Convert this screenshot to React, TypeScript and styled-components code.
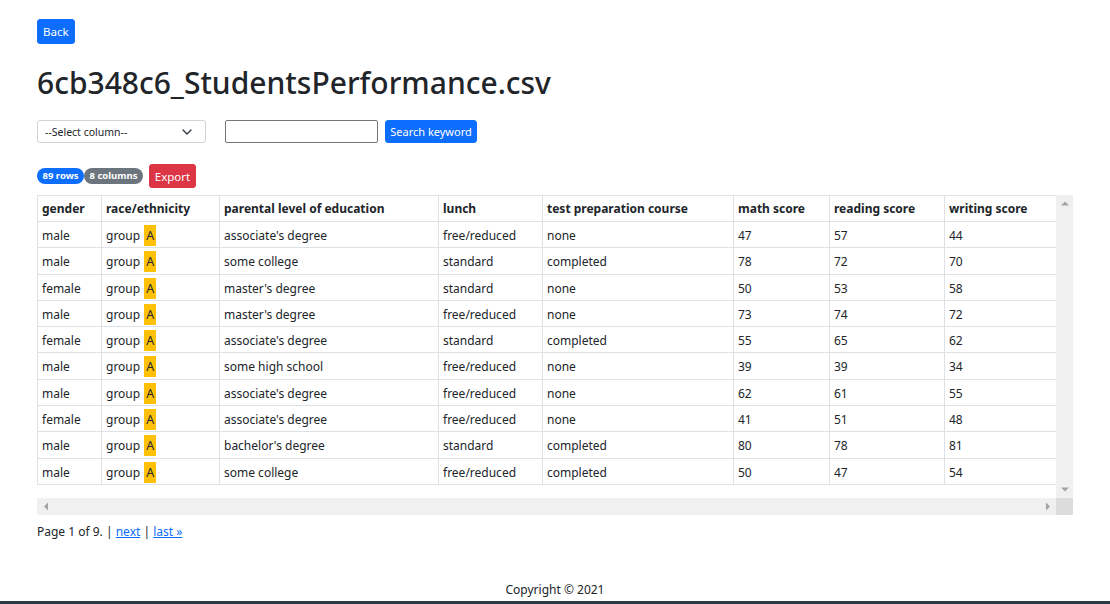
import React from "react";
import styled, { createGlobalStyle } from "styled-components";

const Global = createGlobalStyle`
  html, body { margin: 0; padding: 0; background: #fff; overflow: hidden; }
  body { font-family: "Noto Sans", "Open Sans", sans-serif; color: #212529; font-size: 12px; }
  * { box-sizing: border-box; }
`;

const Page = styled.div`
  display: flex;
  flex-direction: column;
`;

const Main = styled.main`
  padding: 19px 37px 0 37px;
  display: flex;
  flex-direction: column;
  align-items: flex-start;
`;

const Btn = styled.button<{ $variant: "primary" | "danger" }>`
  font-family: inherit;
  font-size: 11.5px;
  line-height: 17px;
  color: #fff;
  border: 1px solid ${(p) => (p.$variant === "primary" ? "#0d6efd" : "#dc3545")};
  background: ${(p) => (p.$variant === "primary" ? "#0d6efd" : "#dc3545")};
  border-radius: 3px;
  padding: 3px 5px;
  cursor: pointer;
`;

const Title = styled.h1`
  font-size: 30px;
  font-weight: 500;
  line-height: 38px;
  margin: 20px 0 18px 0;
  color: #212529;
`;

const Controls = styled.div`
  display: flex;
  align-items: center;
  gap: 7px;
`;

const SelectBox = styled.div`
  width: 169px;
  height: 23px;
  border: 1px solid #ced4da;
  border-radius: 3px;
  display: flex;
  align-items: center;
  justify-content: space-between;
  padding: 0 13px 0 7px;
  font-size: 10.5px;
  color: #212529;
  margin-right: 12px;
`;

const TextInput = styled.input`
  width: 153px;
  height: 23px;
  border: 1px solid #767676;
  border-radius: 2px;
  padding: 0 4px;
  font-family: inherit;
`;

const SearchBtn = styled(Btn)`
  height: 23px;
  width: 92px;
  padding: 0;
  font-size: 11px;
`;

const InfoRow = styled.div`
  display: flex;
  align-items: center;
  margin-top: 21px;
`;

const Badge = styled.span<{ $bg: string }>`
  display: inline-block;
  background: ${(p) => p.$bg};
  color: #fff;
  font-size: 9.5px;
  font-weight: 700;
  line-height: 16px;
  height: 16px;
  padding: 0 5.5px;
  border-radius: 8px;
`;

const ExportBtn = styled(Btn)`
  margin-left: 6px;
  height: 24px;
  width: 47px;
  padding: 0;
`;

const Scroller = styled.div`
  width: 100%;
  margin-top: 7px;
  display: grid;
  grid-template-columns: 1fr 17px;
  grid-template-rows: 303px 17px;
  overflow: hidden;
`;

const Viewport = styled.div`
  overflow: hidden;
  background: #fff;
`;

const Track = styled.div<{ $dir: "v" | "h" }>`
  background: #f0f0f0;
  display: flex;
  flex-direction: ${(p) => (p.$dir === "v" ? "column" : "row")};
  justify-content: space-between;
  align-items: center;
`;

const Corner = styled.div`
  background: #dcdcdc;
`;

const Arrow = styled.span<{ $rot: number }>`
  width: 17px;
  height: 17px;
  display: flex;
  align-items: center;
  justify-content: center;
  & svg { transform: rotate(${(p) => p.$rot}deg); }
`;

const Tri = () => (
  <svg width="8" height="5" viewBox="0 0 8 5">
    <path d="M0 4.5L4 0.5L8 4.5Z" fill="#a3a3a3" />
  </svg>
);

const Table = styled.table`
  width: 100%;
  border-collapse: collapse;
  table-layout: fixed;
`;

const Th = styled.th`
  text-align: left;
  font-weight: 700;
  font-size: 12px;
  line-height: 17px;
  padding: 4px 4px;
  border: 1px solid #dee2e6;
  white-space: nowrap;
  color: #212529;
`;

const Td = styled.td`
  font-size: 12px;
  line-height: 17.3px;
  padding: 5px 4px 3px 4px;
  border: 1px solid #dee2e6;
  white-space: nowrap;
  color: #212529;
`;

const Mark = styled.span`
  background: #ffc107;
  padding: 2px 2px 2px 2px;
  font-size: 12.5px;
  margin-left: 1px;
`;

const Pager = styled.div`
  margin-top: 8px;
  font-size: 12px;
  line-height: 17px;
`;

const Link = styled.a`
  color: #0d6efd;
  text-decoration: underline;
`;

const Copyright = styled.div`
  margin-top: 41px;
  text-align: center;
  font-size: 12px;
  line-height: 17px;
  padding-bottom: 3px;
`;

const Footer = styled.footer`
  height: 3px;
  background: #2c3a45;
`;

const cols = [64, 118, 219, 104, 191, 96, 115, 112];
const headers = [
  "gender",
  "race/ethnicity",
  "parental level of education",
  "lunch",
  "test preparation course",
  "math score",
  "reading score",
  "writing score",
];
const rows: [string, string, string, string, number, number, number][] = [
  ["male", "associate's degree", "free/reduced", "none", 47, 57, 44],
  ["male", "some college", "standard", "completed", 78, 72, 70],
  ["female", "master's degree", "standard", "none", 50, 53, 58],
  ["male", "master's degree", "free/reduced", "none", 73, 74, 72],
  ["female", "associate's degree", "standard", "completed", 55, 65, 62],
  ["male", "some high school", "free/reduced", "none", 39, 39, 34],
  ["male", "associate's degree", "free/reduced", "none", 62, 61, 55],
  ["female", "associate's degree", "free/reduced", "none", 41, 51, 48],
  ["male", "bachelor's degree", "standard", "completed", 80, 78, 81],
  ["male", "some college", "free/reduced", "completed", 50, 47, 54],
];

export default function App() {
  return (
    <Page>
      <Global />
      <Main>
        <Btn $variant="primary">Back</Btn>
        <Title>6cb348c6_StudentsPerformance.csv</Title>
        <Controls>
          <SelectBox>
            <span>--Select column--</span>
            <svg width="10" height="6" viewBox="0 0 10 6">
              <path d="M1 1l4 4 4-4" fill="none" stroke="#343a40" strokeWidth="1.4" strokeLinecap="round" strokeLinejoin="round" />
            </svg>
          </SelectBox>
          <TextInput />
          <SearchBtn $variant="primary">Search keyword</SearchBtn>
        </Controls>
        <InfoRow>
          <Badge $bg="#0d6efd">89 rows</Badge>
          <Badge $bg="#6c757d">8 columns</Badge>
          <ExportBtn $variant="danger">Export</ExportBtn>
        </InfoRow>
        <Scroller>
          <Viewport>
            <Table>
              <colgroup>
                {cols.map((w, i) => (
                  <col key={i} style={{ width: w }} />
                ))}
              </colgroup>
              <thead>
                <tr>
                  {headers.map((h) => (
                    <Th key={h}>{h}</Th>
                  ))}
                </tr>
              </thead>
              <tbody>
                {rows.map((r, i) => (
                  <tr key={i}>
                    <Td>{r[0]}</Td>
                    <Td>
                      group <Mark>A</Mark>
                    </Td>
                    <Td>{r[1]}</Td>
                    <Td>{r[2]}</Td>
                    <Td>{r[3]}</Td>
                    <Td>{r[4]}</Td>
                    <Td>{r[5]}</Td>
                    <Td>{r[6]}</Td>
                  </tr>
                ))}
              </tbody>
            </Table>
          </Viewport>
          <Track $dir="v">
            <Arrow $rot={0}><Tri /></Arrow>
            <Arrow $rot={180}><Tri /></Arrow>
          </Track>
          <Track $dir="h">
            <Arrow $rot={-90}><Tri /></Arrow>
            <Arrow $rot={90}><Tri /></Arrow>
          </Track>
          <Corner />
        </Scroller>
        <Pager>
          Page 1 of 9. | <Link href="#">next</Link> | <Link href="#">last »</Link>
        </Pager>
      </Main>
      <Copyright>Copyright © 2021</Copyright>
      <Footer />
    </Page>
  );
}
